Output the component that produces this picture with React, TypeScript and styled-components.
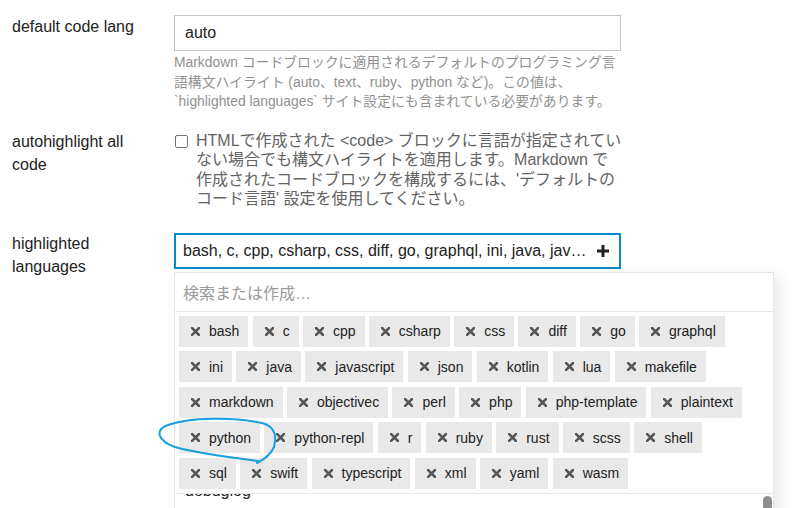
import styled, { createGlobalStyle } from 'styled-components'

const LANGS = [
  'bash', 'c', 'cpp', 'csharp', 'css', 'diff', 'go', 'graphql',
  'ini', 'java', 'javascript', 'json', 'kotlin', 'lua', 'makefile',
  'markdown', 'objectivec', 'perl', 'php', 'php-template', 'plaintext',
  'python', 'python-repl', 'r', 'ruby', 'rust', 'scss', 'shell',
  'sql', 'swift', 'typescript', 'xml', 'yaml', 'wasm',
]

const FONT = `"Liberation Sans", Arial, "Noto Sans CJK JP", sans-serif`

const GlobalStyle = createGlobalStyle`
  html, body {
    margin: 0;
    background: #ffffff;
    font-family: ${FONT};
    color: #222222;
  }
`

// ── Layout ───────────────────────────────────────────────────────────────────

const Page = styled.div`
  position: relative;
  padding: 15px 0 0 12px;
  height: 508px;
  box-sizing: border-box;
  overflow: hidden;
`

const SettingRow = styled.div<{ $gap: number }>`
  display: grid;
  grid-template-columns: 162px 447px;
  align-items: start;
  margin-bottom: ${({ $gap }) => $gap}px;
`

const Label = styled.div`
  width: 140px;
  font-size: 16px;
  line-height: 23px;
  color: #222222;
`

const Control = styled.div``

// ── Text input ───────────────────────────────────────────────────────────────

const TextInput = styled.div`
  box-sizing: border-box;
  height: 36px;
  border: 1px solid #c4c4c4;
  padding: 0 10px;
  display: flex;
  align-items: center;
  font-size: 16px;
  color: #222222;
`

const Help = styled.div`
  margin-top: 2px;
  font-size: 13.85px;
  line-height: 19.6px;
  color: #919191;
  white-space: nowrap;
`

// ── Checkbox ─────────────────────────────────────────────────────────────────

const CheckLine = styled.label`
  display: flex;
  align-items: flex-start;
  gap: 8px;
  padding: 1px 0 3px 1px;
`

const CheckBox = styled.span`
  flex: none;
  width: 13px;
  height: 13px;
  box-sizing: border-box;
  margin-top: 4px;
  border: 1px solid #767676;
  border-radius: 2px;
  background: #ffffff;
`

const CheckText = styled.span`
  font-size: 16px;
  line-height: 19.5px;
  color: #646464;
  white-space: nowrap;
`

// ── Multi select ─────────────────────────────────────────────────────────────

const SelectKit = styled.div`
  position: relative;
  margin-top: 1px;
`

const SelectHeader = styled.div`
  box-sizing: border-box;
  height: 36px;
  border: 2px solid #0a88cc;
  padding: 0 9px 0 7px;
  display: flex;
  align-items: center;
  gap: 8px;
`

const SelectValue = styled.span`
  flex: 1;
  min-width: 0;
  font-size: 16px;
  color: #222222;
  white-space: nowrap;
  overflow: hidden;
  text-overflow: ellipsis;
`

const Dropdown = styled.div`
  position: absolute;
  top: calc(100% + 3px);
  left: 0;
  width: 600px;
  box-sizing: border-box;
  background: #ffffff;
  border: 1px solid #e6e6e6;
  box-shadow: 6px 4px 14px rgba(0, 0, 0, 0.09);
  z-index: 5;
`

const Filter = styled.div`
  height: 38px;
  display: flex;
  align-items: center;
  padding-left: 8px;
  border-bottom: 1px solid #e6e6e6;
  font-size: 16px;
  color: #9a9a9a;
`

const Chips = styled.div`
  display: flex;
  flex-wrap: wrap;
  gap: 4.5px 4.3px;
  padding: 4px 21px 4.5px 4px;
  border-bottom: 1px solid #e6e6e6;
`

const Chip = styled.span`
  display: inline-flex;
  align-items: center;
  gap: 9px;
  height: 31px;
  padding: 0 9px 0 12px;
  background: #e9e9e9;
  font-size: 14px;
  color: #222222;
`

const Options = styled.div`
  position: relative;
  height: 40px;
  overflow: hidden;
`

const OptionItem = styled.div`
  margin-top: -15px;
  padding-left: 10px;
  font-size: 16px;
  line-height: 24px;
  color: #222222;
`

const ScrollThumb = styled.div`
  position: absolute;
  top: 2px;
  right: 1px;
  width: 9px;
  height: 30px;
  border-radius: 5px;
  background: #8f8f8f;
`

const Annotation = styled.svg`
  position: absolute;
  left: 150px;
  top: 410px;
  pointer-events: none;
  z-index: 10;
`

// ── Icons ────────────────────────────────────────────────────────────────────

const XIcon = () => (
  <svg width="9" height="9" viewBox="0 0 9 9">
    <path d="M1 1 L8 8 M8 1 L1 8" stroke="#555555" strokeWidth="2.5" strokeLinecap="square" />
  </svg>
)

const PlusIcon = () => (
  <svg width="14" height="14" viewBox="0 0 14 14">
    <path d="M7 1 V13 M1 7 H13" stroke="#222222" strokeWidth="3" />
  </svg>
)

// ── Component ────────────────────────────────────────────────────────────────

export default function App() {
  return (
    <>
      <GlobalStyle />
      <Page>
        <SettingRow $gap={18}>
          <Label>default code lang</Label>
          <Control>
            <TextInput>auto</TextInput>
            <Help>
              Markdown コードブロックに適用されるデフォルトのプログラミング言<br />
              語構文ハイライト (auto、text、ruby、python など)。この値は、<br />
              `highlighted languages` サイト設定にも含まれている必要があります。
            </Help>
          </Control>
        </SettingRow>

        <SettingRow $gap={20}>
          <Label>autohighlight all code</Label>
          <Control>
            <CheckLine>
              <CheckBox />
              <CheckText>
                HTMLで作成された &lt;code&gt; ブロックに言語が指定されてい<br />
                ない場合でも構文ハイライトを適用します。Markdown で<br />
                作成されたコードブロックを構成するには、'デフォルトの<br />
                コード言語' 設定を使用してください。
              </CheckText>
            </CheckLine>
          </Control>
        </SettingRow>

        <SettingRow $gap={0}>
          <Label>highlighted languages</Label>
          <SelectKit>
            <SelectHeader>
              <SelectValue>{LANGS.join(', ')}</SelectValue>
              <PlusIcon />
            </SelectHeader>
            <Dropdown>
              <Filter>検索または作成…</Filter>
              <Chips>
                {LANGS.map(lang => (
                  <Chip key={lang}>
                    <XIcon />
                    {lang}
                  </Chip>
                ))}
              </Chips>
              <Options>
                <OptionItem>debuglog</OptionItem>
                <ScrollThumb />
              </Options>
            </Dropdown>
          </SelectKit>
        </SettingRow>

        <Annotation width="140" height="60" viewBox="0 0 140 60">
          <path
            d="M108 51 C85 48, 45 43, 25 37 C8 31, 4 20, 18 15 C40 7, 85 7, 112 13 C127 17, 126 28, 124 37 C121 44, 115 49, 107 53"
            fill="none"
            stroke="#1b9ee0"
            strokeWidth="2"
            strokeLinecap="round"
          />
        </Annotation>
      </Page>
    </>
  )
}
